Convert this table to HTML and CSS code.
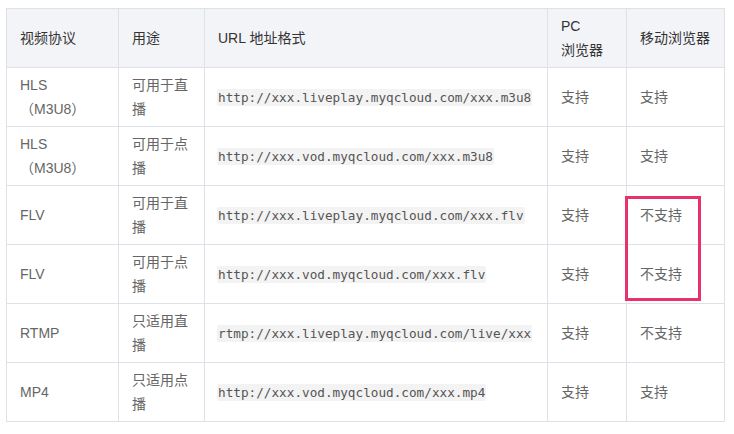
FILE: index.html
```html
<!DOCTYPE html>
<html lang="zh">
<head>
<meta charset="utf-8">
<link rel="stylesheet" href="styles.css">
</head>
<body>
<div class="wrap">
<table class="proto">
  <colgroup>
    <col class="c1"><col class="c2"><col class="c3"><col class="c4"><col class="c5">
  </colgroup>
  <thead>
    <tr><th>视频协议</th><th>用途</th><th>URL 地址格式</th><th>PC<br>浏览器</th><th>移动浏览器</th></tr>
  </thead>
  <tbody>
    <tr><td>HLS<br>（M3U8）</td><td>可用于直播</td><td><code>http://xxx.liveplay.myqcloud.com/xxx.m3u8</code></td><td>支持</td><td>支持</td></tr>
    <tr><td>HLS<br>（M3U8）</td><td>可用于点播</td><td><code>http://xxx.vod.myqcloud.com/xxx.m3u8</code></td><td>支持</td><td>支持</td></tr>
    <tr><td>FLV</td><td>可用于直播</td><td><code>http://xxx.liveplay.myqcloud.com/xxx.flv</code></td><td>支持</td><td>不支持</td></tr>
    <tr><td>FLV</td><td>可用于点播</td><td><code>http://xxx.vod.myqcloud.com/xxx.flv</code></td><td>支持</td><td>不支持</td></tr>
    <tr><td>RTMP</td><td>只适用直播</td><td><code>rtmp://xxx.liveplay.myqcloud.com/live/xxx</code></td><td>支持</td><td>不支持</td></tr>
    <tr><td>MP4</td><td>只适用点播</td><td><code>http://xxx.vod.myqcloud.com/xxx.mp4</code></td><td>支持</td><td>支持</td></tr>
  </tbody>
</table>
<div class="mark"></div>
</div>
</body>
</html>
```

FILE: styles.css
```css
html, body { margin: 0; padding: 0; background: #fff; }
body { padding: 8px 0 0 6px; }
.wrap { position: relative; width: 718px; }
.proto {
  border-collapse: collapse;
  table-layout: fixed;
  width: 718px;
  font-family: "Liberation Sans", "Noto Sans CJK SC", sans-serif;
  font-size: 14px;
  line-height: 24px;
  color: #666;
}
.c1 { width: 112px; }
.c2 { width: 86px; }
.c3 { width: 343px; }
.c4 { width: 79px; }
.c5 { width: 98px; }
.proto th, .proto td {
  border: 1px solid #dfe1e9;
  padding: 5px 12px 5px 13px;
  text-align: left;
  vertical-align: middle;
  height: 48px;
}
.proto th { background: #f3f4f8; color: #333; font-weight: normal; }
.proto code {
  font-family: "DejaVu Sans Mono", "Liberation Mono", monospace;
  font-size: 12.7px;
  background: #f3f3f3;
  border-radius: 2px;
  padding: 1px 1px;
  margin-left: -1px;
  color: #555;
  white-space: nowrap;
}
.mark {
  position: absolute;
  left: 619px;
  top: 188px;
  width: 70px;
  height: 99px;
  border: 3px solid #e8326c;
}
```
